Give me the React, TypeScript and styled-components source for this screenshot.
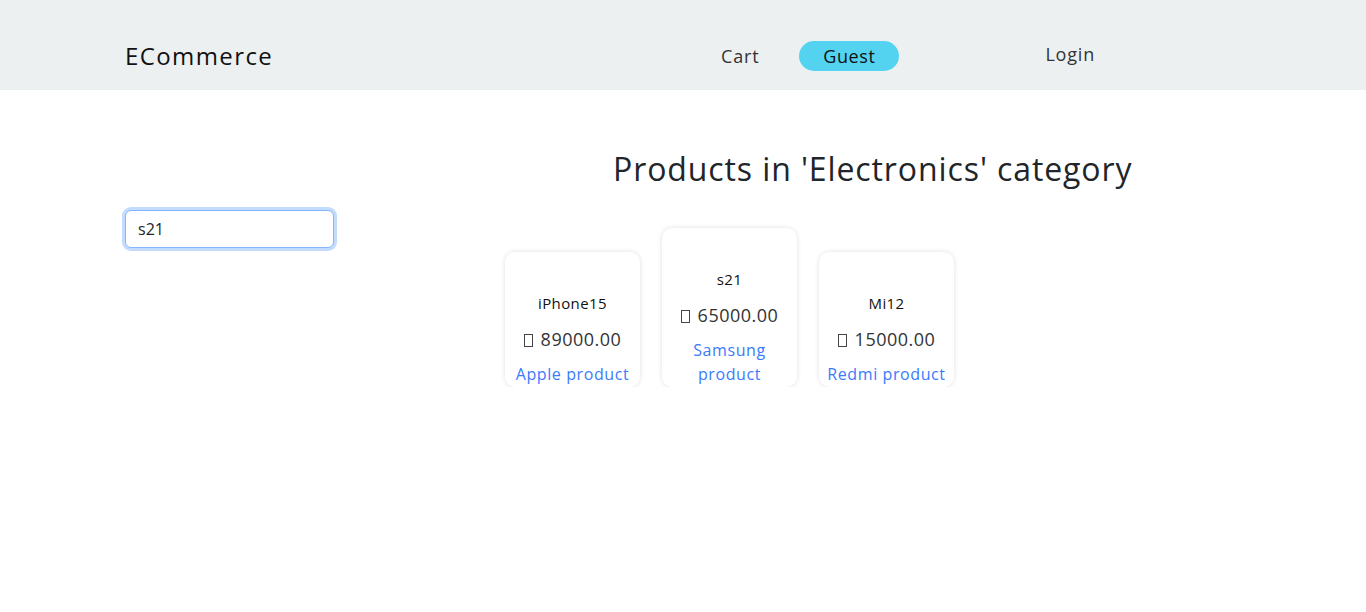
import React from "react";
import styled, { createGlobalStyle } from "styled-components";

const Global = createGlobalStyle`
  html, body { margin: 0; padding: 0; background: #fff; }
  body { font-family: "Open Sans", "Noto Sans", sans-serif; color: #212529; }
  * { box-sizing: border-box; }
`;

const NavBar = styled.header`
  height: 90px;
  padding-top: 20px;
  background: #ecf0f1;
`;

const NavInner = styled.div`
  width: 1116px;
  margin: 0 auto;
  height: 100%;
  display: flex;
  align-items: center;
`;

const Brand = styled.div`
  font-size: 24px;
  letter-spacing: 1.4px;
  color: #111;
  margin-top: 1px;
`;

const NavList = styled.nav`
  margin-left: auto;
  margin-right: 146px;
  display: flex;
  align-items: center;
`;

const NavLink = styled.span<{ $shift?: number }>`
  font-size: 18px;
  letter-spacing: 0.8px;
  color: #333;
  position: relative;
  top: ${(p) => p.$shift ?? 0}px;
`;

const Pill = styled.span`
  display: inline-flex;
  align-items: center;
  justify-content: center;
  width: 100px;
  height: 30px;
  border-radius: 15px;
  background: #53d3f0;
  font-size: 18px;
  letter-spacing: 0.6px;
  color: #111;
  margin: 0 146px 0 40px;
  position: relative;
  top: 1px;
`;

const Main = styled.main`
  width: 1116px;
  margin: 0 auto;
  display: flex;
`;

const Aside = styled.aside`
  width: 273px;
  padding-top: 120px;
`;

const SearchBox = styled.input`
  width: 209px;
  height: 38px;
  border: 1px solid #86b7fe;
  border-radius: 6px;
  box-shadow: 0 0 0 3px rgba(13, 110, 253, 0.25);
  outline: none;
  padding: 0 12px;
  font-family: inherit;
  font-size: 16px;
  color: #212529;
`;

const Content = styled.section`
  flex: 1;
`;

const Heading = styled.h2`
  margin: 55px 0 0 215px;
  font-size: 32px;
  letter-spacing: 0.9px;
  line-height: 48px;
  font-weight: 400;
  color: #212529;
`;

const Cards = styled.div`
  margin: 35px 0 0 107px;
  display: flex;
  align-items: flex-end;
  gap: 22px;
`;

const Card = styled.div`
  width: 135px;
  background: #fff;
  border-radius: 10px;
  box-shadow: 0 0 5px rgba(0, 0, 0, 0.13);
  padding: 40px 4px 1px;
  text-align: center;
`;

const Name = styled.div`
  font-size: 15px;
  letter-spacing: 0.4px;
  line-height: 22px;
  color: #111;
`;

const Price = styled.div`
  margin-top: 13px;
  font-size: 18px;
  letter-spacing: 0.5px;
  line-height: 24px;
  color: #333;
`;

const Tofu = styled.span`
  display: inline-block;
  width: 9px;
  height: 13px;
  border: 1px solid #444;
  vertical-align: -1px;
  margin-right: 8px;
`;

const Desc = styled.div`
  margin-top: 11px;
  font-size: 16px;
  letter-spacing: 0.6px;
  line-height: 24px;
  color: #3a7afe;
`;

const products = [
  { name: "iPhone15", price: "89000.00", desc: "Apple product" },
  { name: "s21", price: "65000.00", desc: "Samsung product" },
  { name: "Mi12", price: "15000.00", desc: "Redmi product" },
];

export default function App() {
  return (
    <>
      <Global />
      <NavBar>
        <NavInner>
          <Brand>ECommerce</Brand>
          <NavList>
            <NavLink $shift={1}>Cart</NavLink>
            <Pill>Guest</Pill>
            <NavLink $shift={-1}>Login</NavLink>
          </NavList>
        </NavInner>
      </NavBar>
      <Main>
        <Aside>
          <SearchBox defaultValue="s21" />
        </Aside>
        <Content>
          <Heading>Products in 'Electronics' category</Heading>
          <Cards>
            {products.map((p) => (
              <Card key={p.name}>
                <Name>{p.name}</Name>
                <Price>
                  <Tofu />
                  {p.price}
                </Price>
                <Desc>{p.desc}</Desc>
              </Card>
            ))}
          </Cards>
        </Content>
      </Main>
    </>
  );
}
